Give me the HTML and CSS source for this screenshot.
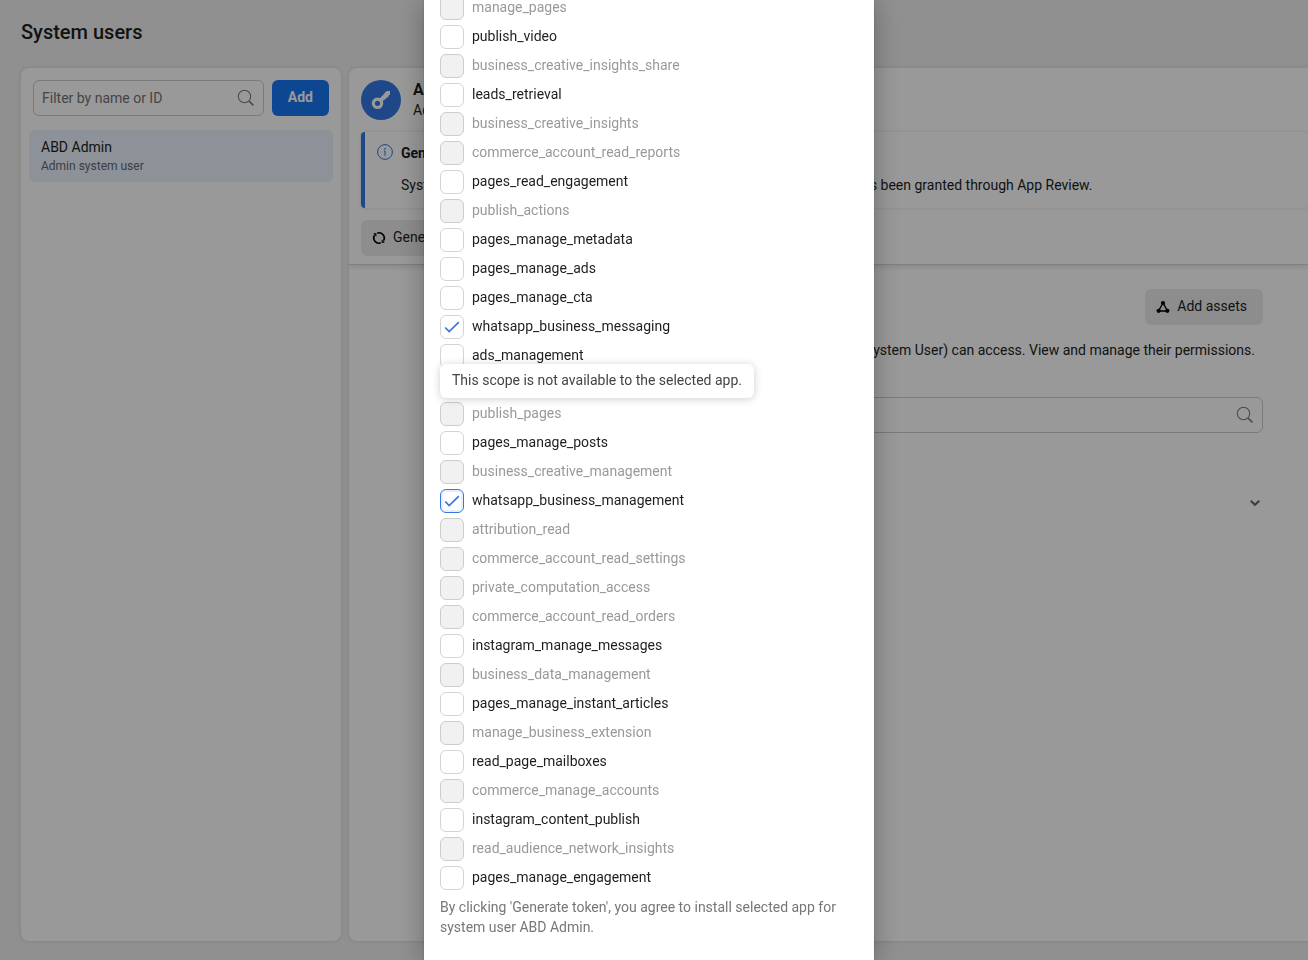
FILE: index.html
```html
<!DOCTYPE html>
<html lang="en">
<head>
  <meta charset="UTF-8">
  <title>System users</title>
  <link rel="stylesheet" href="styles.css">
</head>
<body>
  <div class="page">
    <h1>System users</h1>
    <div class="columns">
      <div class="card users">
        <div class="toolbar">
          <div class="search">
            <input type="text" placeholder="Filter by name or ID" aria-label="Filter by name or ID">
            <svg width="18" height="18" viewBox="0 0 18 18"><circle cx="7.5" cy="7.5" r="6.2"/><path d="M12 12l4.3 4.3" stroke-width="1.7"/></svg>
          </div>
          <button class="btn-primary">Add</button>
        </div>
        <a href="#" class="user">
          <span class="name">ABD Admin</span>
          <span class="role">Admin system user</span>
        </a>
      </div>

      <div class="card detail">
        <div class="detail-head">
          <div class="profile">
            <div class="avatar">
              <svg width="22" height="22" viewBox="0 0 22 22">
                <path d="M9.5 12.5L18 4" stroke="#fff" stroke-width="4" fill="none"/>
                <path d="M15 3.5L17 2h3v3.7l-1.4.5-.4 2-2.2.5-1 2-2.5-1z" fill="#fff"/>
                <circle cx="7.5" cy="14.3" r="4.2" fill="none" stroke="#fff" stroke-width="3.2"/>
              </svg>
            </div>
            <div>
              <h2>ABD Admin</h2>
              <p>Admin system user</p>
            </div>
          </div>
          <div class="notice">
            <svg width="16" height="16" viewBox="0 0 16 16"><circle cx="8" cy="8" r="7.4"/><path d="M7 7h1v4.8"/><path d="M8 4v1.4" stroke-width="1.4"/></svg>
            <div>
              <h3>Generate access tokens</h3>
              <p>System users can only generate permissions for which advanced access has been granted through App Review.</p>
            </div>
          </div>
          <button class="btn">
            <svg width="14" height="14" viewBox="0 0 14 14"><path d="M5.3 2.1A5.2 5.2 0 0 1 11.4 9.8M8.7 11.9A5.2 5.2 0 0 1 2.6 4.2" fill="none" stroke="#000" stroke-width="1.7"/><path d="M9.6 8.6v3.2h3.2zM4.4 5.4V2.2H1.2z"/></svg>
            Generate new token
          </button>
        </div>
        <div class="detail-body">
          <button class="btn">
            <svg width="14" height="14" viewBox="0 0 14 14"><path d="M7 3L2.5 11h9z" fill="none" stroke="#000" stroke-width="1.4"/><circle cx="7" cy="3" r="2.1"/><circle cx="2.6" cy="10.8" r="2.1"/><circle cx="11.4" cy="10.8" r="2.1"/></svg>
            Add assets
          </button>
          <p>These are the assets that ABD Admin (Admin System User) can access. View and manage their permissions.</p>
          <div class="search">
            <input type="text" aria-label="Search assets">
            <svg width="18" height="18" viewBox="0 0 18 18"><circle cx="7.5" cy="7.5" r="6.2"/><path d="M12 12l4.3 4.3" stroke-width="1.7"/></svg>
          </div>
          <button class="toggle" aria-label="Expand">
            <svg width="12" height="8" viewBox="0 0 12 8"><path d="M1.7 1.7L6 5.8l4.3-4.1"/></svg>
          </button>
        </div>
      </div>
    </div>
  </div>

  <div class="overlay">
    <div class="modal" role="dialog" aria-label="Generate token">
      <ul class="scopes">
        <li><label><input type="checkbox" disabled>manage_pages</label></li>
        <li><label><input type="checkbox">publish_video</label></li>
        <li><label><input type="checkbox" disabled>business_creative_insights_share</label></li>
        <li><label><input type="checkbox">leads_retrieval</label></li>
        <li><label><input type="checkbox" disabled>business_creative_insights</label></li>
        <li><label><input type="checkbox" disabled>commerce_account_read_reports</label></li>
        <li><label><input type="checkbox">pages_read_engagement</label></li>
        <li><label><input type="checkbox" disabled>publish_actions</label></li>
        <li><label><input type="checkbox">pages_manage_metadata</label></li>
        <li><label><input type="checkbox">pages_manage_ads</label></li>
        <li><label><input type="checkbox">pages_manage_cta</label></li>
        <li><label><input type="checkbox" checked>whatsapp_business_messaging</label></li>
        <li><label><input type="checkbox">ads_management</label></li>
        <li>
          <input type="checkbox" disabled aria-labelledby="scope-tip">
          <div class="tooltip" id="scope-tip" role="tooltip">This scope is not available to the selected app.</div>
        </li>
        <li><label><input type="checkbox" disabled>publish_pages</label></li>
        <li><label><input type="checkbox">pages_manage_posts</label></li>
        <li><label><input type="checkbox" disabled>business_creative_management</label></li>
        <li><label><input type="checkbox" class="active" checked>whatsapp_business_management</label></li>
        <li><label><input type="checkbox" disabled>attribution_read</label></li>
        <li><label><input type="checkbox" disabled>commerce_account_read_settings</label></li>
        <li><label><input type="checkbox" disabled>private_computation_access</label></li>
        <li><label><input type="checkbox" disabled>commerce_account_read_orders</label></li>
        <li><label><input type="checkbox">instagram_manage_messages</label></li>
        <li><label><input type="checkbox" disabled>business_data_management</label></li>
        <li><label><input type="checkbox">pages_manage_instant_articles</label></li>
        <li><label><input type="checkbox" disabled>manage_business_extension</label></li>
        <li><label><input type="checkbox">read_page_mailboxes</label></li>
        <li><label><input type="checkbox" disabled>commerce_manage_accounts</label></li>
        <li><label><input type="checkbox">instagram_content_publish</label></li>
        <li><label><input type="checkbox" disabled>read_audience_network_insights</label></li>
        <li><label><input type="checkbox">pages_manage_engagement</label></li>
      </ul>
      <p class="terms">By clicking 'Generate token', you agree to install selected app for system user ABD Admin.</p>
    </div>
  </div>
</body>
</html>
```
FILE: styles.css
```css
* {
  margin: 0;
  padding: 0;
  box-sizing: border-box;
}
body {
  background: #f0f0f0;
  color: #1c1e21;
  font: 14px/20px Roboto, "Liberation Sans", sans-serif;
  overflow: hidden;
}
ul {
  list-style: none;
}
svg {
  flex: none;
}
button, input {
  font: inherit;
  color: inherit;
}
button {
  border: none;
  cursor: pointer;
}

.page {
  display: flex;
  flex-direction: column;
  height: 100vh;
  padding: 20px 0 19px 21px;
}
h1 {
  font-size: 20px;
  line-height: 24px;
  font-weight: 500;
  margin-bottom: 24px;
}
.columns {
  display: flex;
  flex: 1;
  gap: 8px;
}
.card {
  background: #fff;
  border-radius: 8px;
  box-shadow: 0 0 4px rgba(0, 0, 0, .12);
}
.users {
  width: 320px;
  padding: 12px 8px;
}
.toolbar {
  display: flex;
  gap: 8px;
  padding: 0 4px;
  margin-bottom: 14px;
}
.search {
  display: flex;
  align-items: center;
  flex: 1;
  height: 36px;
  padding: 0 8px;
  border: 1px solid #ccc;
  border-radius: 6px;
}
.search input {
  flex: 1;
  min-width: 0;
  border: none;
  outline: none;
  background: none;
}
.search input::placeholder {
  color: #737373;
}
.search svg {
  fill: none;
  stroke: #777d88;
  stroke-width: 1.1;
}
.btn-primary {
  padding: 0 16px 2px;
  border-radius: 6px;
  background: #1877f2;
  color: #fff;
  font-weight: 700;
}
.user {
  display: block;
  padding: 7px 12px;
  border-radius: 6px;
  background: #ebf3ff;
  color: inherit;
  text-decoration: none;
}
.user span {
  display: block;
}
.user .role {
  font-size: 12px;
  line-height: 18px;
  color: #65676b;
}

.detail {
  flex: 1;
  min-width: 0;
  overflow: hidden;
  border-radius: 8px 0 0 8px;
}
.detail-head {
  padding: 12px 0 8px 12px;
  border-bottom: 1px solid #d5d5d5;
  box-shadow: 0 1px 6px rgba(0, 0, 0, .15);
}
.profile {
  display: flex;
  gap: 12px;
  margin-bottom: 12px;
}
.avatar {
  display: flex;
  align-items: center;
  justify-content: center;
  width: 40px;
  height: 40px;
  border-radius: 50%;
  background: #3578e5;
}
h2 {
  font-size: 16px;
  line-height: 20px;
  font-weight: 700;
}
.notice {
  display: flex;
  gap: 8px;
  margin-bottom: 12px;
  padding: 11px 12px 13px;
  border-left: 4px solid #3578e5;
  border-radius: 4px;
  box-shadow: 0 0 3px rgba(0, 0, 0, .15);
}
.notice svg {
  margin-top: 1px;
  fill: none;
  stroke: #3578e5;
}
.notice h3 {
  font-size: 14px;
  line-height: 20px;
  font-weight: 700;
  margin-bottom: 12px;
}
.notice p {
  white-space: nowrap;
}
.btn {
  display: flex;
  align-items: center;
  gap: 7px;
  height: 36px;
  padding: 0 16px 2px 11px;
  border-radius: 6px;
  background: #ebebeb;
}
.btn svg {
  margin-top: 2px;
}
.detail-body {
  display: flex;
  flex-direction: column;
  align-items: flex-end;
  padding: 24px 45px 0 200px;
}
.detail-body p {
  padding: 15px 8px 37px;
  white-space: nowrap;
}
.detail-body .search {
  flex: none;
  width: 100%;
}
.toggle {
  margin-top: 64px;
  padding: 2px;
  background: none;
}
.toggle svg {
  display: block;
  fill: none;
  stroke: #65676b;
  stroke-width: 2;
}

.overlay {
  position: fixed;
  inset: 0;
  display: flex;
  justify-content: center;
  padding-right: 10px;
  background: rgba(0, 0, 0, .4);
}
/* scrolled to the end, so the list runs off the top */
.modal {
  display: flex;
  flex-direction: column;
  justify-content: flex-end;
  width: 450px;
  padding: 0 16px 23px;
  background: #fff;
  box-shadow: 0 2px 26px rgba(0, 0, 0, .3), 0 0 2px rgba(0, 0, 0, .2);
}
.scopes {
  display: flex;
  flex-direction: column;
  gap: 5px;
  margin-bottom: 7px;
}
.scopes li {
  position: relative;
  height: 24px;
}
.scopes label {
  display: flex;
  gap: 8px;
  line-height: 22px;
}
.scopes label:has(:disabled) {
  color: #999;
}
.scopes input {
  appearance: none;
  flex: none;
  width: 24px;
  height: 24px;
  border: 1px solid #d4d4d4;
  border-radius: 6px;
  background: #fff;
}
.scopes input:disabled {
  border-color: #ccc;
  background: #f1f1f1;
}
.scopes input:checked {
  background: #fff url("data:image/svg+xml,%3Csvg xmlns='http://www.w3.org/2000/svg' width='16' height='14' viewBox='0 0 16 14'%3E%3Cpath d='M1.2 7.5l4 4L14.8 2.2' fill='none' stroke='%233578e5' stroke-width='1.7'/%3E%3C/svg%3E") center no-repeat;
}
.scopes input.active {
  border-color: #3578e5;
  box-shadow: inset 0 0 0 2px #e6effd;
}
.tooltip {
  position: absolute;
  left: 0;
  top: -9px;
  z-index: 1;
  padding: 6px 12px 8px;
  border-radius: 6px;
  background: #fff;
  color: #444;
  white-space: nowrap;
  box-shadow: 0 1px 8px rgba(0, 0, 0, .2);
}
.terms {
  color: #777;
}
```
